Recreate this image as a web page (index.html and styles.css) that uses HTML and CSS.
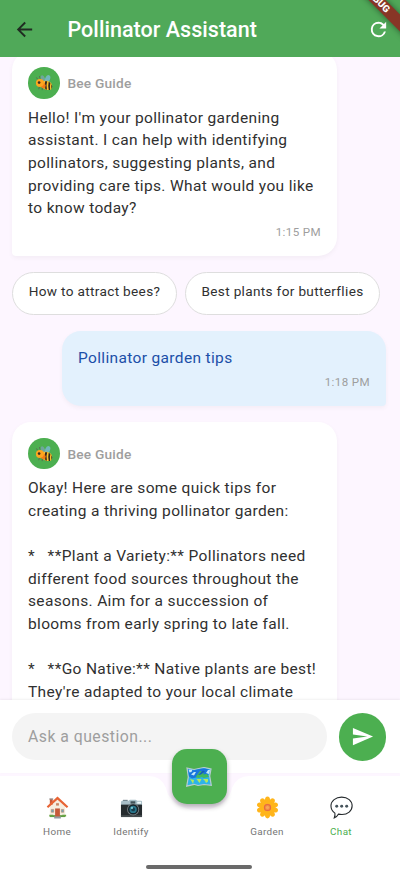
FILE: index.html
```html
<!DOCTYPE html>
<html lang="en">
<head>
<meta charset="utf-8">
<meta name="viewport" content="width=device-width, initial-scale=1">
<title>Pollinator Assistant</title>
<link rel="stylesheet" href="styles.css">
</head>
<body>
<svg width="0" height="0" class="defs">
  <symbol id="bee" viewBox="0 0 20 18">
    <path d="M3 5 1.5 2.8M5.5 3.8 5 1.2M5 13l-1 3M8 14l0 3M11 14l1 3" stroke="#596352" stroke-width="1" fill="none"/>
    <ellipse cx="9" cy="4.500" rx="2.200" ry="4.300" transform="rotate(-24 9 4.500)" fill="#6fa69b"/>
    <ellipse cx="14" cy="4.500" rx="2.700" ry="4.600" transform="rotate(22 14 4.500)" fill="#70b7bb"/>
    <path d="M8 7.500c5-2.500 11 .5 11 4.500 0 3-1 4.800-2.500 5C12 17 8 15 7 12z" fill="#fbc02d"/>
    <path d="M11.300 7q-1.500 4 .2 8.700l1.800.8q-1.300-5 .3-9.500zM15.300 7.700q-1 4 0 9.100l1.600.1q-.7-4.500.3-8zM18 10l1.300 3-.8 3z" fill="#33291f"/>
    <circle cx="5.500" cy="9" r="4.600" fill="#ffa51f"/>
    <path d="M6 13.500c3-.5 4-3 4-5l2 3-1 4z" fill="#f57c16"/>
    <circle cx="4.500" cy="8.500" r="1.500" fill="#372d20"/>
  </symbol>
</svg>
<div class="app">
  <header class="bar">
    <svg class="back" viewBox="0 0 24 24"><path d="M20 11H7.830l5.590-5.590L12 4l-8 8 8 8 1.410-1.410L7.830 13H20z"/></svg>
    <h1>Pollinator Assistant</h1>
    <svg class="refresh" viewBox="0 0 24 24"><path d="M17.650 6.350A7.960 7.960 0 0 0 12 4a8 8 0 1 0 7.730 10h-2.080A6 6 0 1 1 12 6c1.660 0 3.140.69 4.220 1.780L13 11h7V4z"/></svg>
    <div class="debug">DEBUG</div>
  </header>
  <main class="chat">
    <article class="msg bot">
      <div class="who"><span class="avatar"><svg><use href="#bee"/></svg></span>Bee Guide</div>
      <p>Hello! I'm your pollinator gardening<br>assistant. I can help with identifying<br>pollinators, suggesting plants, and<br>providing care tips. What would you like<br>to know today?</p>
      <time>1:15 PM</time>
    </article>
    <div class="chips"><button class="c1">How to attract bees?</button><button class="c2">Best plants for butterflies</button></div>
    <article class="msg user"><p>Pollinator garden tips</p><time>1:18 PM</time></article>
    <article class="msg bot">
      <div class="who"><span class="avatar"><svg><use href="#bee"/></svg></span>Bee Guide</div>
      <p>Okay! Here are some quick tips for<br>creating a thriving pollinator garden:<br><br>*&nbsp;&nbsp; **Plant a Variety:** Pollinators need<br>different food sources throughout the<br>seasons. Aim for a succession of<br>blooms from early spring to late fall.<br><br>*&nbsp;&nbsp; **Go Native:** Native plants are best!<br>They're adapted to your local climate</p>
    </article>
  </main>
  <form class="composer">
    <div class="field">Ask a question...</div>
    <div class="send"><svg viewBox="0 0 24 24"><path d="M2.010 21 23 12 2.010 3 2 10l15 2-15 2z"/></svg></div>
  </form>
  <nav class="tabs">
    <svg class="navshape" viewBox="0 0 400 101"><path d="M0 0H149Q161 0 166 12C172 42 226 42 232 12Q237 0 249 0H400V101H0z"/></svg>
    <div class="items">
      <a class="tab"><svg viewBox="0 0 24 24">
        <path d="M4 11 12 4l8 7v11H4z" fill="#f6eee0"/><path d="M4 20h16v2H4z" fill="#5d9c42"/><path d="M3.500 20.500h4M17 20.500h4" stroke="#68a445" stroke-width="2"/>
        <path d="M4 3h3v6H4z" fill="#c65a3a"/><path d="M3.500 2.500h4v1.300h-4z" fill="#8f8f8f"/>
        <path d="M1.500 11.800 12 2.200l10.500 9.600" fill="none" stroke="#e86434" stroke-width="2.300"/>
        <path d="M9.500 13h5v9h-5z" fill="#c65a3a"/><path d="M5.500 14H8v3H5.500zM16 14h2.500v3H16z" fill="#72a7b4" stroke="#bd7558" stroke-width=".5"/><path d="M10.500 7.500h3v2.500h-3z" fill="#c88664"/><path d="M8.500 21.300h7V23.500h-7z" fill="#929aa0"/>
      </svg><span>Home</span></a>
      <a class="tab"><svg viewBox="0 0 24 24">
        <path d="M3 4h5v2H3z" fill="#667780"/><path d="M1 6.500Q1 5 3 5h6l1.300-1h6L18 5h4q1 0 1 1.500V10H1z" fill="#a8bec7"/><path d="M1 9h22v12.500H1z" fill="#252b2e"/><path d="M1 20h22v2H1z" fill="#444b4e"/>
        <path d="M11 5.500h5V8h-5z" fill="#405258"/><path d="M18 6h4v2h-4z" fill="#eef8fa"/>
        <circle cx="13.700" cy="14" r="6.300" fill="#777f83"/><circle cx="13.700" cy="14" r="5.400" fill="#162329"/><circle cx="13.700" cy="14" r="3.800" fill="#28758b"/><circle cx="13.700" cy="14" r="2" fill="#173b4b"/><circle cx="12.500" cy="12.500" r="1.200" fill="#7bc5cf"/>
      </svg><span>Identify</span></a>
      <div class="gap"></div>
      <a class="tab"><svg viewBox="0 0 24 24">
        <g fill="#ffb51b"><g id="p"><ellipse cx="12" cy="4.600" rx="2.700" ry="4"/><ellipse cx="12" cy="19.400" rx="2.700" ry="4"/></g><use href="#p" transform="rotate(36 12 12)"/><use href="#p" transform="rotate(72 12 12)"/><use href="#p" transform="rotate(108 12 12)"/><use href="#p" transform="rotate(144 12 12)"/></g>
        <circle cx="12" cy="12" r="6.500" fill="#ffb51b"/><circle cx="12" cy="12" r="3.800" fill="#f18e47"/><circle cx="12" cy="12" r="3.200" fill="none" stroke="#e86c3f" stroke-width="1.100"/><circle cx="12" cy="12" r="1.600" fill="#f8a758"/>
      </svg><span>Garden</span></a>
      <a class="tab on"><svg viewBox="0 0 24 24">
        <path d="M12.200 1.200c6.300 0 10.900 3.900 10.900 9.100s-4.700 9-10.600 9c-1.300 0-2.500-.1-3.600-.4-.8 1.500-2.300 3.500-4.500 4 .8-1.800 1-3.500.7-5C2.500 16.200 1 13.600 1 10.300c0-5.300 5-9.100 11.200-9.100z" fill="#fff" stroke="#252a2d" stroke-width="1.150"/>
        <g fill="#46545c"><circle cx="7" cy="10.700" r="1.550"/><circle cx="12.200" cy="10.700" r="1.550"/><circle cx="17.400" cy="10.700" r="1.550"/></g>
      </svg><span>Chat</span></a>
    </div>
    <div class="fab"><svg viewBox="0 0 26 20">
      <path d="M1 1 8 2.500l5-1 5-1 7 1.500-1.300 7 1.600 9.300-7.300-.8-6 1-4-1.200L.7 19.200 2.300 10z" fill="#2eb4e8" stroke="#b9cbd0" stroke-width="1.200"/>
      <path d="M2 2l6 1.200 5-1.200 5-.8 5 1.200-1 6-5 2-3-2-4 2-4 1-3-2z" fill="#1976dc"/>
      <path d="M2.500 2.500h4l-1 2.500-2 .5zM8 5h2l-2 3.500-3-1zM22 3l2 0-1 4-3-1z" fill="#c4e9f6"/>
      <path d="M10 9.500 14 4l4 1.500-1 2 4-.5 2 3-5 1-2-1-3 1-3-.5z" fill="#42b95c"/><path d="M12 8 17 3.500l2 1-4 3z" fill="#175dbc"/>
      <path d="M4 12l4 1-1 4-1-2zM10.500 12h5l-2 4-1.500-2zM17 12l5 0 0 2.500-2 1.500-1-2z" fill="#b4e85d"/>
    </svg></div>
    <div class="pill"></div>
  </nav>
</div>
</body>
</html>
```
FILE: styles.css
```css
* { box-sizing: border-box; }
body { margin: 0; font-family: Roboto, sans-serif; background: #fdf6ff; }
.defs { position: absolute; }
.app { width: 400px; height: 877px; display: flex; flex-direction: column; overflow: hidden; background: #fdf6ff; }
.bar { position: relative; height: 57px; flex: none; display: flex; align-items: center; padding: 2px 10px 0 13px; background: #50a959; overflow: hidden; }
.bar h1 { margin: 0 auto 0 31.500px; font-size: 21.500px; font-weight: 500; line-height: 28px; color: #fff; letter-spacing: .04px; }
.back { width: 23px; height: 23px; fill: #202c22; }
.refresh { width: 23px; height: 23px; fill: #fff; }
.debug { position: absolute; top: -6px; right: -31.500px; width: 110px; height: 12px; line-height: 12px; text-align: center; transform: rotate(45deg); background: #883626; color: #fff; font-size: 9.800px; font-weight: 900; box-shadow: 0 0 6px #0007; }
.chat { flex: none; height: 643px; overflow: hidden; padding: 0 14px 0 12px; display: flex; flex-direction: column; align-items: flex-start; }
.msg { flex: none; padding: 16px; box-shadow: 0 2px 5px rgba(0,0,0,.045); color: #303030; }
.msg p { margin: 0; font-size: 15.500px; line-height: 22.670px; letter-spacing: .35px; white-space: nowrap; }
.msg time { display: block; margin-top: 5px; font-size: 11.600px; line-height: 15px; letter-spacing: .38px; text-align: right; color: #9e9e9e; }
.bot { width: 325px; background: #fff; border-radius: 19px 19px 19px 4px; }
.bot:first-child { margin-top: -6px; height: 205px; }
.bot:last-child { height: 400px; padding-top: 15.500px; }
.who { display: flex; align-items: center; gap: 8px; height: 32px; margin-bottom: 7.500px; font-size: 13.700px; font-weight: 500; letter-spacing: .2px; color: #9e9e9e; }
.avatar { width: 31.500px; height: 31.500px; border-radius: 50%; background: #4caf50; display: grid; place-items: center; }
.avatar svg { width: 18px; height: 16px; }
.chips { display: flex; gap: 8px; margin: 16px 0; }
.chips button { height: 43px; padding: 0 0 5px; border: 1px solid #dedede; border-radius: 22px; background: #fff; color: #303030; font: 13.600px Roboto, sans-serif; letter-spacing: .33px; white-space: nowrap; }
.c1 { width: 165px; }
.c2 { width: 195px; }
.user { align-self: flex-end; width: 324px; height: 75px; margin-bottom: 16px; background: #e3f1fd; border-radius: 19px 19px 4px 19px; }
.user p { color: #1b4fa8; }
.composer { flex: none; height: 73px; display: flex; align-items: flex-start; justify-content: space-between; padding: 13px 14px 0 12px; background: #fff; box-shadow: 0 -1px 2px rgba(0,0,0,.06); position: relative; }
.field { width: 315px; height: 47px; padding-left: 16px; border-radius: 24px; background: #f4f4f4; color: #9e9e9e; font-size: 15.800px; line-height: 47px; letter-spacing: .47px; }
.send { width: 47.500px; height: 47.500px; border-radius: 50%; background: #4caf50; display: grid; place-items: center; }
.send svg { width: 23px; height: 23px; fill: #fff; }
.tabs { position: relative; height: 101px; margin-top: 3px; flex: none; }
.navshape { position: absolute; inset: 0; width: 400px; height: 101px; fill: #fff; }
.items { position: relative; display: flex; justify-content: space-between; padding: 20px 22px 0 20px; }
.tab { width: 74px; display: flex; flex-direction: column; align-items: center; gap: 5.500px; color: #757575; font-size: 9.900px; line-height: 14px; letter-spacing: .35px; }
.tab svg { width: 23px; height: 23px; }
.tab.on { color: #4caf50; }
.gap { width: 62px; }
.fab { position: absolute; left: 171.500px; top: -27px; width: 55px; height: 55px; border-radius: 15px; background: #4caf50; display: grid; place-items: center; box-shadow: 0 3px 5px rgba(0,0,0,.3); }
.fab svg { width: 26px; height: 20px; }
.pill { position: absolute; left: 146px; top: 89px; width: 106px; height: 4px; border-radius: 2px; background: #6a6a6a; }
```
